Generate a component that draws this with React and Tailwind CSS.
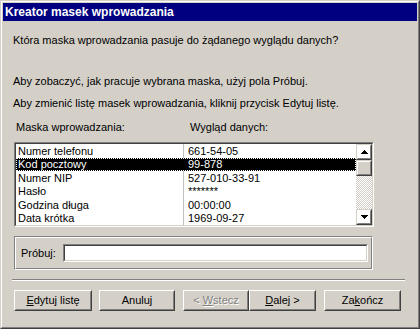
import React from "react";

function Raised({ className = "", innerClassName = "", children }) {
  return (
    <div className={"border border-t-white border-l-white border-b-[#404040] border-r-[#404040] " + className}>
      <div className={"w-full h-full border border-t-[#d4d0c8] border-l-[#d4d0c8] border-b-[#808080] border-r-[#808080] " + innerClassName}>
        {children}
      </div>
    </div>
  );
}

function ScrollBtn({ up }) {
  return (
    <div className="h-[16px] w-[16px] border border-t-[#d4d0c8] border-l-[#d4d0c8] border-b-[#404040] border-r-[#404040]">
      <div className="w-full h-full border border-t-white border-l-white border-b-[#808080] border-r-[#808080] flex items-center justify-center">
        <svg width="7" height="4" viewBox="0 0 7 4" className={up ? "" : "rotate-180"}>
          <path d="M3 0h1v1h1v1h1v1h1v1H0V3h1V2h1V1h1z" fill="#000" />
        </svg>
      </div>
    </div>
  );
}

export default function App() {
  const rows = [
    ["Numer telefonu", "661-54-05"],
    ["Kod pocztowy", "99-878"],
    ["Numer NIP", "527-010-33-91"],
    ["Hasło", "*******"],
    ["Godzina długa", "00:00:00"],
    ["Data krótka", "1969-09-27"],
  ];
  return (
    <div className="w-[420px] h-[329px] bg-[#d4d0c8] border border-t-[#d4d0c8] border-l-[#d4d0c8] border-b-[#404040] border-r-[#404040] text-[11px] text-black font-[Liberation_Sans,Arial,sans-serif]">
      <div className="w-full h-full border border-t-white border-l-white border-b-[#808080] border-r-[#808080] p-[1px] flex flex-col">
        <div className="h-[18px] bg-[#000080] text-white font-bold text-[12px] pl-[2px] flex items-center leading-none">
          Kreator masek wprowadzania
        </div>

        <p className="ml-[10px] mt-[13px] leading-[13px] h-[13px]">
          Która maska wprowadzania pasuje do żądanego wyglądu danych?
        </p>
        <p className="ml-[10px] mt-[28px] leading-[13px] h-[13px]">
          Aby zobaczyć, jak pracuje wybrana maska, użyj pola Próbuj.
        </p>
        <p className="ml-[10px] mt-[9px] leading-[13px] h-[13px]">
          Aby zmienić listę masek wprowadzania, kliknij przycisk Edytuj listę.
        </p>

        <div className="ml-[11px] mt-[11px] flex h-[13px] leading-[13px]">
          <span className="w-[176px] pl-[2px]">Maska wprowadzania:</span>
          <span>Wygląd danych:</span>
        </div>

        <div className="ml-[11px] mt-[8px] w-[360px] h-[85px] border border-t-[#808080] border-l-[#808080] border-b-white border-r-white">
          <div className="w-full h-full border border-t-[#404040] border-l-[#404040] border-b-[#d4d0c8] border-r-[#d4d0c8] flex bg-white">
            <div className="flex-1 overflow-hidden">
              {rows.map(([a, b], i) => {
                const sel = i === 1;
                return (
                  <div
                    key={a}
                    className={
                      sel
                        ? "h-[13.5px] flex items-center bg-black text-white outline-1 outline-dotted outline-white -outline-offset-1"
                        : "h-[13.5px] flex items-center"
                    }
                  >
                    <div className={sel ? "w-[168px] h-full pl-[2px] flex items-center" : "w-[168px] h-full pl-[2px] flex items-center border-r border-r-[#c0c0c0]"}>
                      {a}
                    </div>
                    <div className="pl-[4px]">{b}</div>
                  </div>
                );
              })}
            </div>
            <div className="w-[16px] h-full flex flex-col">
              <ScrollBtn up />
              <div className="h-[16px] w-[16px] border border-t-[#d4d0c8] border-l-[#d4d0c8] border-b-[#404040] border-r-[#404040]">
                <div className="w-full h-full border border-t-white border-l-white border-b-[#808080] border-r-[#808080] bg-[#d4d0c8]" />
              </div>
              <div className="flex-1 bg-[repeating-conic-gradient(#d4d0c8_0_25%,#ffffff_0_50%)] bg-[length:2px_2px]" />
              <ScrollBtn />
            </div>
          </div>
        </div>

        <div className="ml-[11px] mt-[9px] w-[359px] h-[34px] border border-t-[#808080] border-l-[#808080] border-b-white border-r-white">
          <div className="w-full h-full border border-t-white border-l-white border-b-[#808080] border-r-[#808080] flex items-center pl-[5px] pr-[3px]">
            <span className="w-[42px]">Próbuj:</span>
            <div className="flex-1 h-[18px] border border-t-[#808080] border-l-[#808080] border-b-white border-r-white">
              <div className="w-full h-full border border-t-[#404040] border-l-[#404040] border-b-[#d4d0c8] border-r-[#d4d0c8] bg-white" />
            </div>
          </div>
        </div>

        <div className="ml-[9px] mt-[9px] w-[393px] h-[2px] border-t border-t-[#808080] border-b border-b-white" />

        <div className="mt-[9px] flex h-[21px]">
          <Raised className="ml-[11px] w-[78px] h-[21px]" innerClassName="flex items-center justify-center">
            <span><u>E</u>dytuj listę</span>
          </Raised>
          <Raised className="ml-[7px] w-[76px] h-[21px]" innerClassName="flex items-center justify-center">
            <span>Anuluj</span>
          </Raised>
          <Raised className="ml-[8px] w-[66px] h-[21px]" innerClassName="flex items-center justify-center">
            <span className="text-[#808080] [text-shadow:1px_1px_0_#ffffff]">&lt; <u>W</u>stecz</span>
          </Raised>
          <Raised className="w-[67px] h-[21px]" innerClassName="flex items-center justify-center">
            <span><u>D</u>alej &gt;</span>
          </Raised>
          <Raised className="ml-[8px] w-[77px] h-[21px]" innerClassName="flex items-center justify-center">
            <span>Za<u>k</u>ończ</span>
          </Raised>
        </div>
      </div>
    </div>
  );
}
